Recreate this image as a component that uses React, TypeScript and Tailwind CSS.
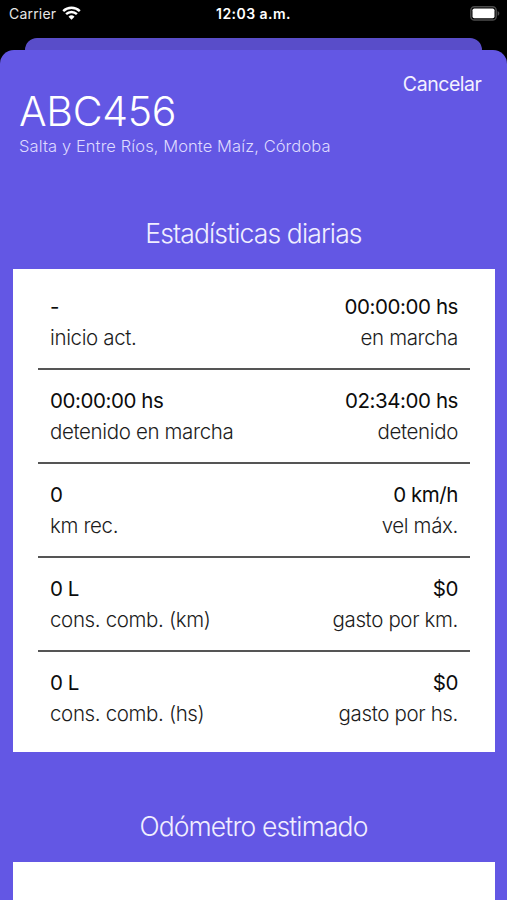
import React from 'react';

interface Stat {
  value: string;
  label: string;
}

const STATS: [Stat, Stat][] = [
  [{ value: '-', label: 'inicio act.' }, { value: '00:00:00 hs', label: 'en marcha' }],
  [{ value: '00:00:00 hs', label: 'detenido en marcha' }, { value: '02:34:00 hs', label: 'detenido' }],
  [{ value: '0', label: 'km rec.' }, { value: '0 km/h', label: 'vel máx.' }],
  [{ value: '0 L', label: 'cons. comb. (km)' }, { value: '$0', label: 'gasto por km.' }],
  [{ value: '0 L', label: 'cons. comb. (hs)' }, { value: '$0', label: 'gasto por hs.' }],
];

const WifiIcon = () => (
  <svg width="19" height="14" viewBox="0 0 19 14" fill="none" stroke="white" strokeWidth="2.4">
    <path d="M1.2 5.1a11.8 11.8 0 0 1 16.6 0" />
    <path d="M4.1 8.2a7.6 7.6 0 0 1 10.8 0" />
    <path d="M9.5 13.8 6.5 10.7a4.3 4.3 0 0 1 6 0Z" fill="white" stroke="none" />
  </svg>
);

const BatteryIcon = () => (
  <svg width="31" height="15" viewBox="0 0 31 15" fill="none">
    <rect x="0.8" y="0.8" width="25.4" height="13.2" rx="3.6" stroke="#4c4c4c" strokeWidth="1.4" />
    <rect x="2.5" y="2.5" width="22" height="9.8" rx="1.8" fill="white" />
    <path d="M27.6 5v4.8c1-.4 1.7-1.3 1.7-2.4S28.6 5.4 27.6 5Z" fill="#4c4c4c" />
  </svg>
);

const StatusBar = () => (
  <div className="grid h-[38px] grid-cols-3 items-start pt-[6px] text-[14px] leading-4 text-[#e6e6e6]">
    <div className="flex items-start pl-[9px]">
      <span className="tracking-[0.2px]">Carrier</span>
      <span className="ml-[5.5px]"><WifiIcon /></span>
    </div>
    <span className="text-center font-semibold tracking-[0.45px] text-white">12:03 a.m.</span>
    <div className="flex justify-end pr-[6px]">
      <BatteryIcon />
    </div>
  </div>
);

const StatCell = ({ stat }: { stat: Stat }) => (
  <div className="text-[20.5px] leading-[31px]">
    <p className="tracking-[-0.43px] text-[#0c0c0c]">{stat.value}</p>
    <p className="font-light tracking-[-0.36px] text-[#1c1c1c]">{stat.label}</p>
  </div>
);

const SectionTitle = ({ children }: { children: React.ReactNode }) => (
  <h2 className="text-center text-[26.5px] font-light leading-8 tracking-[-0.87px] text-[#f0eeff]">{children}</h2>
);

export default function App() {
  return (
    <div className="h-[900px] w-[507px] overflow-hidden bg-black font-['Inter',sans-serif]">
      <StatusBar />
      <div className="mx-[25px] h-3 rounded-t-[12px] bg-[#594dc9]" />
      <main className="h-[850px] rounded-t-[14px] bg-[#6357e4]">
        <div className="flex justify-end pr-[25.5px] pt-[21px]">
          <button className="text-[19.5px] leading-[26px] tracking-[-0.45px] text-[#f3f1ff]">Cancelar</button>
        </div>
        <header className="-mt-[10px] pl-[19px]">
          <h1 className="text-[41px] font-light leading-[48px] tracking-[-0.3px] text-white">ABC456</h1>
          <p className="text-[16.5px] font-[350] leading-[22px] tracking-[0.09px] text-[#dedaff]">
            Salta y Entre Ríos, Monte Maíz, Córdoba
          </p>
        </header>

        <section className="pt-[60px]">
          <SectionTitle>Estadísticas diarias</SectionTitle>
          <div className="ml-[13px] mr-[12px] mt-5 h-[483px] bg-white px-[25px] pt-[7px]">
            {STATS.map((row, i) => (
              <div
                key={i}
                className="flex h-[94px] justify-between border-b-2 border-[#555] px-3 pt-[15px] last:border-b-0"
              >
                <StatCell stat={row[0]} />
                <div className="text-right">
                  <StatCell stat={row[1]} />
                </div>
              </div>
            ))}
          </div>
        </section>

        <section className="pt-[58px]">
          <SectionTitle>Odómetro estimado</SectionTitle>
          <div className="ml-[13px] mr-[12px] mt-5 h-[60px] bg-white" />
        </section>
      </main>
    </div>
  );
}
